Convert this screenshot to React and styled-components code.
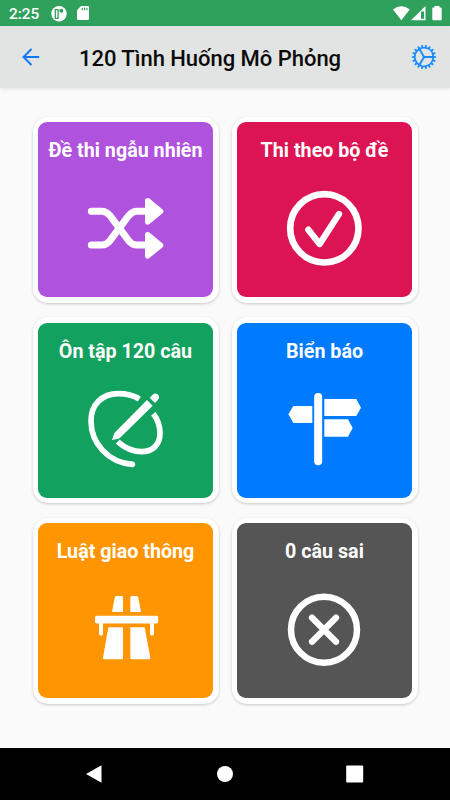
import React from "react";
import styled, { createGlobalStyle } from "styled-components";
import { IoCogOutline } from "react-icons/io5";

const COLOURS = {
  statusBar: "#2fa15d",
  header: "#e2e4e3",
  page: "#fafafa",
  accent: "#0a78ff",
};

const GlobalStyle = createGlobalStyle`
  body {
    margin: 0;
    font-family: Roboto, sans-serif;
  }
`;

const Screen = styled.div`
  display: flex;
  flex-direction: column;
  width: 450px;
  height: 800px;
  overflow: hidden;
  background-color: ${COLOURS.page};
`;

const StatusBar = styled.div`
  display: flex;
  align-items: center;
  flex: none;
  height: 26px;
  box-sizing: border-box;
  padding: 1px 8px 0 9px;
  color: #ffffff;
  background-color: ${COLOURS.statusBar};
`;

const Clock = styled.span`
  width: 42px;
  font-size: 15.4px;
  font-weight: 500;
  line-height: 26px;
`;

const StatusIcons = styled.svg`
  display: block;
  height: 16px;
  width: ${(props) => props.$width}px;
  margin-left: ${(props) => props.$push || "0"};
`;

const Header = styled.header`
  display: flex;
  align-items: center;
  flex: none;
  height: 62px;
  box-sizing: border-box;
  padding: 0 11px 0 21px;
  background-color: ${COLOURS.header};
  box-shadow: 0 1px 4px rgba(0, 0, 0, 0.1);
`;

const IconButton = styled.button`
  display: flex;
  padding: 0;
  border: 0;
  background: none;
  color: ${(props) => props.$colour};
`;

const Title = styled.h1`
  flex: 1;
  margin: 3px 0 0 38px;
  font-size: 22px;
  font-weight: 500;
  line-height: 30px;
  letter-spacing: -0.03px;
  white-space: nowrap;
  color: #0b0b0b;
`;

const Grid = styled.main`
  flex: 1;
  display: grid;
  grid-template-columns: 186px 186px;
  grid-auto-rows: 186px;
  gap: 14.6px 13px;
  justify-content: center;
  align-content: start;
  padding-top: 28.7px;
`;

const Card = styled.div`
  box-sizing: border-box;
  padding: 5.5px;
  border-radius: 15px;
  background-color: #ffffff;
  box-shadow: 0 1px 3px rgba(0, 0, 0, 0.2);
`;

const Tile = styled.div`
  display: flex;
  flex-direction: column;
  align-items: center;
  height: 100%;
  border-radius: 9px;
  background-color: ${(props) => props.$colour};
`;

const TileLabel = styled.div`
  height: 44px;
  margin-top: 18px;
  font-size: 19.7px;
  font-weight: 700;
  line-height: 22px;
  white-space: nowrap;
  color: #ffffff;
`;

const TileIcon = styled.svg`
  display: block;
  width: 91px;
  height: 90px;
  fill: #ffffff;
`;

const Line = styled.path`
  fill: none;
  stroke: #ffffff;
  stroke-width: ${(props) => props.$width};
  stroke-linecap: round;
  stroke-linejoin: round;
`;

const NavBar = styled.nav`
  display: flex;
  align-items: center;
  justify-content: space-between;
  flex: none;
  height: 52px;
  box-sizing: border-box;
  padding: 0 86px;
  background-color: #000000;
`;

const NavIcon = styled.svg`
  display: block;
  width: 18px;
  height: 18px;
  fill: #ffffff;
`;

function ShuffleIcon() {
  return (
    <TileIcon viewBox="165 222 273 270">
      <Line
        $width="21"
        d="M199 304H230Q244 304 255 317L311 392Q322 405 336 405H366"
      />
      <Line
        $width="21"
        d="M199 405H230Q244 405 255 392L311 317Q322 304 336 304H366"
      />
      <path
        d="M368 272L407 304L368 336ZM368 374L407 406L368 438Z"
        stroke="#ffffff"
        strokeWidth="16"
        strokeLinejoin="round"
      />
    </TileIcon>
  );
}

function CheckIcon() {
  return (
    <TileIcon viewBox="162 222 273 270">
      <Line $width="20" d="M195.500 355a102.500 102.500 0 1 0 205 0a102.500 102.500 0 1 0 -205 0" />
      <Line $width="19" d="M250 359L284 402L342 312" />
    </TileIcon>
  );
}

function DrawIcon() {
  return (
    <TileIcon viewBox="165 225 273 270">
      <path
        d="M343 267C325 256 300 251 280 251C230 251 198 285 198 332C198 400 250 458 322 463M385 311C398 328 405 348 405 370C405 405 382 425 350 425C322 425 299 414 278 395"
        fill="none"
        stroke="#ffffff"
        strokeWidth="17"
      />
      <circle cx="322" cy="463" r="8.5" />
      <path d="M261 390L267 372Q268 369 271 366L366 270L383 287L287 382Q284 385 280 386Z" />
      <path d="M374 263L383 254Q391 247 399 254Q406 262 399 269L390 279Z" />
    </TileIcon>
  );
}

function SignpostIcon() {
  return (
    <TileIcon viewBox="162 225 273 270">
      <rect x="267.500" y="249" width="24" height="217" rx="12" />
      <path d="M190 313L205 288H262V339H205Z" />
      <path d="M298 267H394L408 293L394 318H298Z" />
      <path d="M298 328H369L383 354L369 380H298Z" />
    </TileIcon>
  );
}

function RoadIcon() {
  return (
    <TileIcon viewBox="165 225 273 270">
      <path d="M274 258H290Q294 258 294 262V306H261L269 263Q270 258 274 258Z" />
      <path d="M320 258H335Q339 258 340 263L348 306H316V262Q316 258 320 258Z" />
      <rect x="210" y="317.500" width="189.500" height="23" rx="5" />
      <path d="M222 335H234V371a6 6 0 0 1 -12 0ZM375 335H387V371a6 6 0 0 1 -12 0Z" />
      <path d="M250 352H294V444Q294 448 290 448H238Q234 448 234 443Z" />
      <path d="M316 352H359L376 443Q376 448 372 448H320Q316 448 316 444Z" />
    </TileIcon>
  );
}

function CrossIcon() {
  return (
    <TileIcon viewBox="162 225 273 270">
      <Line $width="19.500" d="M198 359a99 99 0 1 0 198 0a99 99 0 1 0 -198 0" />
      <Line $width="19" d="M261 323L333 395M333 323L261 395" />
    </TileIcon>
  );
}

const TILES = [
  { label: "Đề thi ngẫu nhiên", colour: "#af52de", Icon: ShuffleIcon },
  { label: "Thi theo bộ đề", colour: "#dd1453", Icon: CheckIcon },
  { label: "Ôn tập 120 câu", colour: "#12a15e", Icon: DrawIcon },
  { label: "Biển báo", colour: "#007aff", Icon: SignpostIcon },
  { label: "Luật giao thông", colour: "#ff9500", Icon: RoadIcon },
  { label: "0 câu sai", colour: "#555555", Icon: CrossIcon },
];

function App() {
  return (
    <Screen>
      <GlobalStyle />
      <StatusBar>
        <Clock>2:25</Clock>
        <StatusIcons $width={40} viewBox="0 0 40 16" fill="#ffffff">
          <circle cx="8" cy="7.700" r="7.700" />
          <path
            d="M4.300 3.700H7.100V12.300H4.300Z"
            fill="none"
            stroke={COLOURS.statusBar}
            strokeWidth="1.300"
          />
          <circle cx="10.300" cy="4.700" r="2" fill={COLOURS.statusBar} />
          <path d="M30 0H37Q38 0 38 1V13Q38 14 37 14H27Q26 14 26 13V4.300Z" />
          <path
            d="M31.300 1.800V4.300M33.600 1.800V4.300M35.900 1.800V4.300"
            stroke={COLOURS.statusBar}
            strokeWidth="1.200"
          />
        </StatusIcons>
        <StatusIcons $width={50} $push="auto" viewBox="0 0 50 16" fill="#ffffff">
          <path d="M1 3.500Q9.300 -3 17.700 3.500L9.300 14.300Z" />
          <path d="M19 14.300L33.500 0V14.300Z" />
          <path d="M29 5.500H32V12.800H29Z" fill={COLOURS.statusBar} />
          <path d="M42.500 0H47.500V1.500H48.700Q49.700 1.500 49.700 2.500V13.300Q49.700 14.300 48.700 14.300H41.300Q40.300 14.300 40.300 13.300V2.500Q40.300 1.500 41.300 1.500H42.500Z" />
        </StatusIcons>
      </StatusBar>
      <Header>
        <IconButton $colour={COLOURS.accent} aria-label="back">
          <svg width="20" height="20" viewBox="0 0 20 20">
            <path
              d="M18.200 10H2.500M10.500 2L2.500 10L10.500 18"
              fill="none"
              stroke="currentColor"
              strokeWidth="1.900"
            />
          </svg>
        </IconButton>
        <Title>120 Tình Huống Mô Phỏng</Title>
        <IconButton $colour="#1a8cff" aria-label="settings">
          <IoCogOutline size={30} />
        </IconButton>
      </Header>
      <Grid>
        {TILES.map(({ label, colour, Icon }) => (
          <Card key={label}>
            <Tile $colour={colour}>
              <TileLabel>{label}</TileLabel>
              <Icon />
            </Tile>
          </Card>
        ))}
      </Grid>
      <NavBar>
        <NavIcon viewBox="0 0 18 18">
          <path d="M0 9L15.500 0.200V17.800Z" />
        </NavIcon>
        <NavIcon viewBox="0 0 18 18">
          <circle cx="9" cy="9" r="8" />
        </NavIcon>
        <NavIcon viewBox="0 0 18 18">
          <rect x="0.200" y="0.500" width="17" height="17" rx="1" />
        </NavIcon>
      </NavBar>
    </Screen>
  );
}

export default App;
